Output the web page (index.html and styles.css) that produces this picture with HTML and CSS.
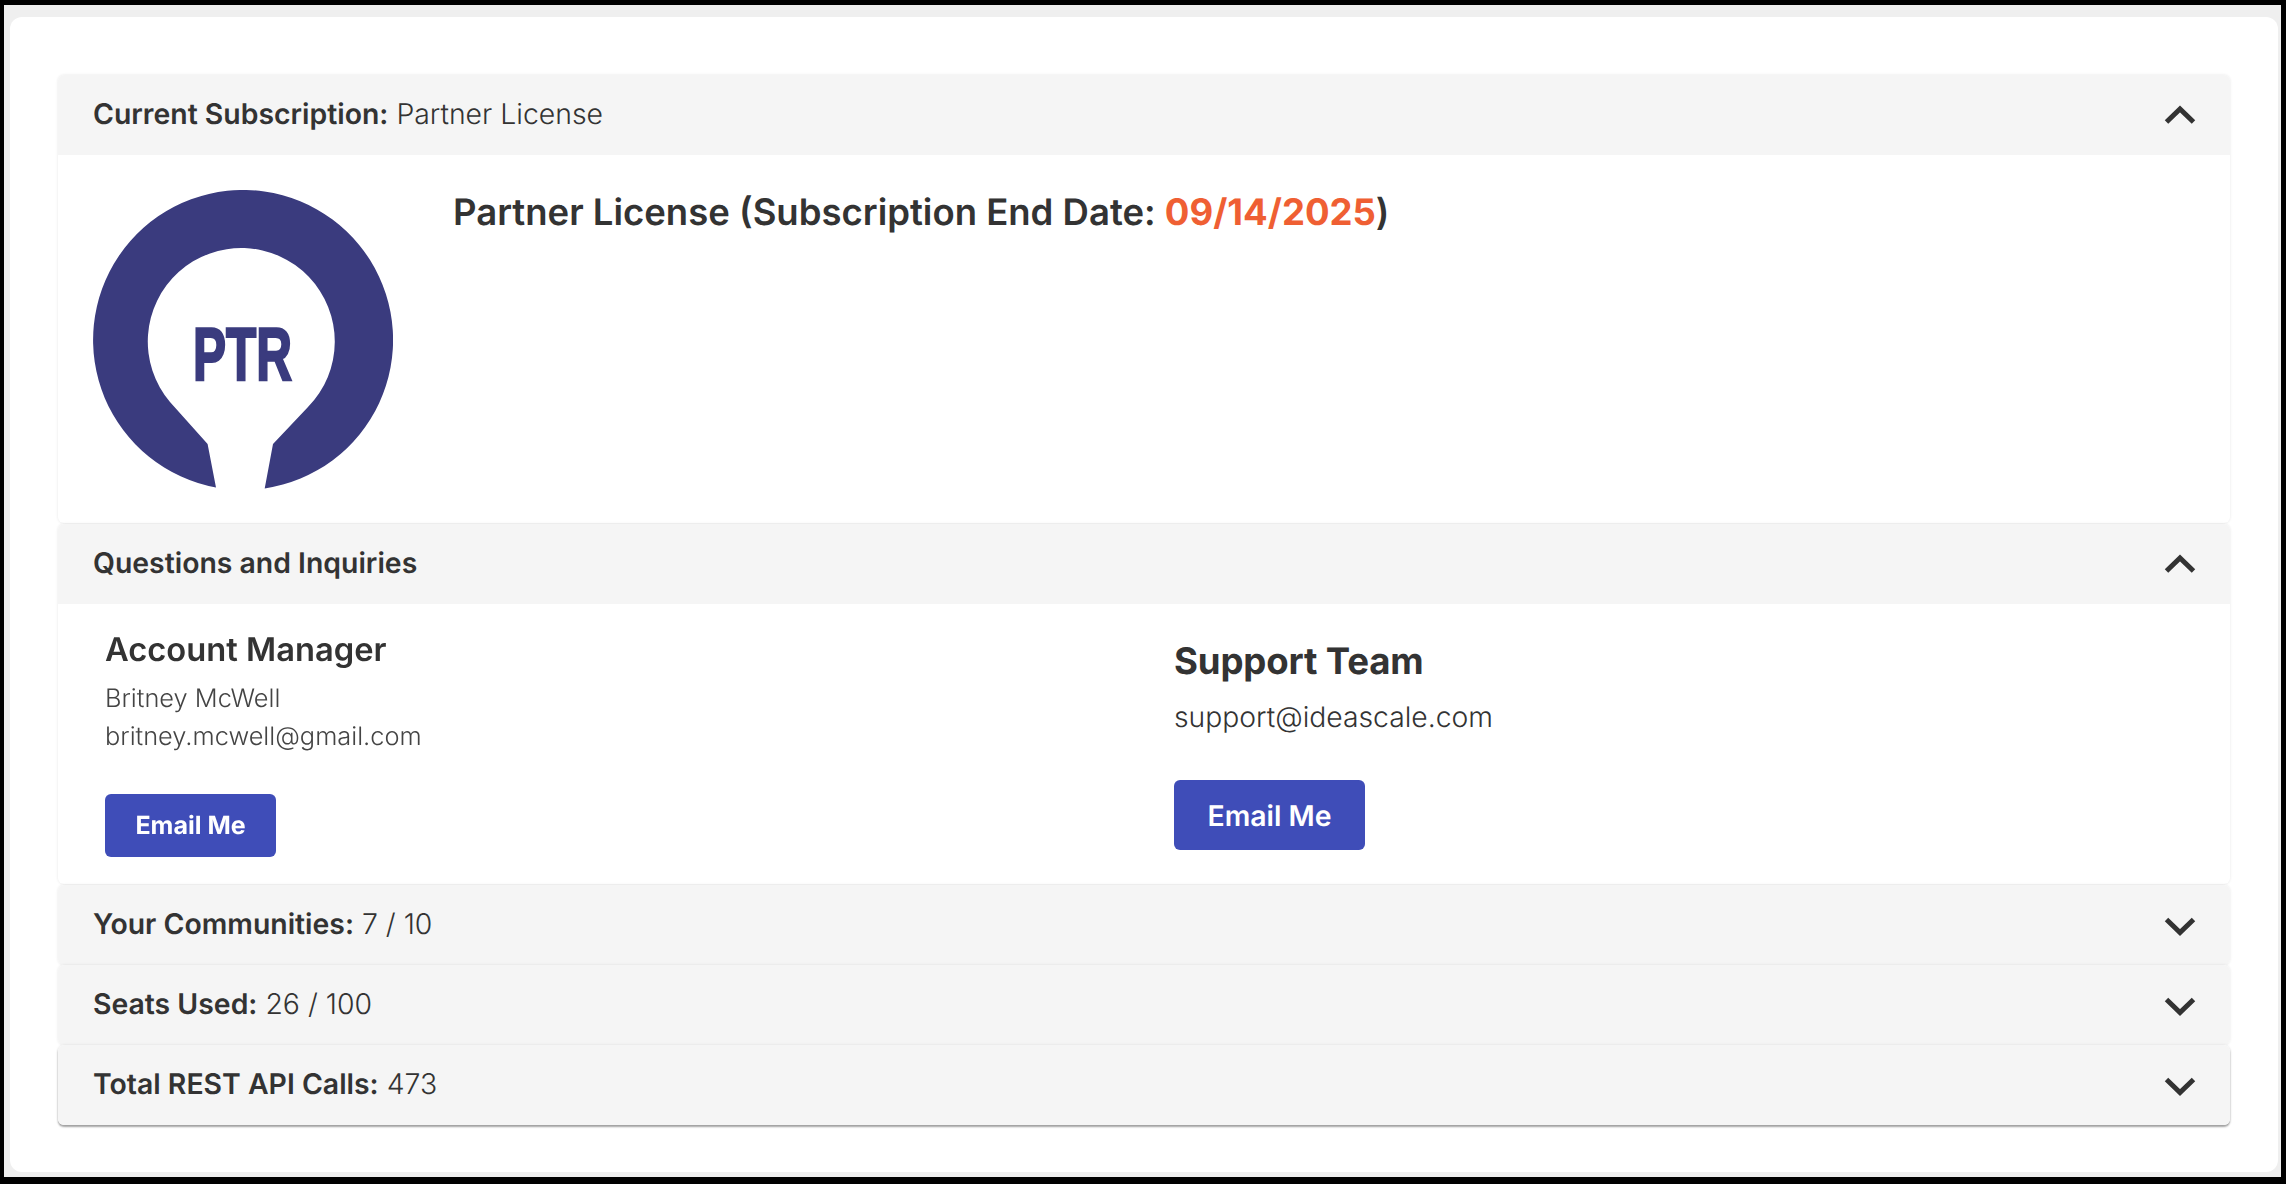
FILE: index.html
```html
<!DOCTYPE html>
<html lang="en">
<head>
<meta charset="utf-8">
<title>Subscription</title>
<link rel="stylesheet" href="styles.css">
</head>
<body>
<div class="frame">
  <main class="sheet">
    <section class="panel open">
      <header class="head">
        <p class="head-text"><b>Current Subscription:</b> Partner License</p>
        <svg class="chev" viewBox="0 0 30 20"><path d="M1.5 17 15 4l13.500 13"/></svg>
      </header>
      <div class="license">
        <svg class="logo" viewBox="0 0 300 300">
          <path class="logo-ring" d="M171.7 298.4A150 150 0 1 0 123 297.500L114.600 254 77 212A93.500 93.500 0 1 1 215 217L180 254Z"/>
          <text class="logo-text" transform="translate(100 190) scale(.66 1)">PTR</text>
        </svg>
        <h2 class="license-title">Partner License (Subscription End Date: <span class="date">09/14/2025</span>)</h2>
      </div>
    </section>
    <section class="panel open">
      <header class="head">
        <p class="head-text"><b>Questions and Inquiries</b></p>
        <svg class="chev" viewBox="0 0 30 20"><path d="M1.5 17 15 4l13.500 13"/></svg>
      </header>
      <div class="contacts">
        <div class="contact small">
          <h3 class="contact-title">Account Manager</h3>
          <p class="contact-line first">Britney McWell</p>
          <p class="contact-line">britney.mcwell@gmail.com</p>
          <a class="btn">Email Me</a>
        </div>
        <div class="contact large">
          <h3 class="contact-title">Support Team</h3>
          <p class="contact-line first">support@ideascale.com</p>
          <a class="btn">Email Me</a>
        </div>
      </div>
    </section>
    <section class="panel">
      <header class="head">
        <p class="head-text"><b>Your Communities:</b> 7 / 10</p>
        <svg class="chev" viewBox="0 0 30 20"><path d="M1.5 4.500 15 17.500 28.500 4.500"/></svg>
      </header>
    </section>
    <section class="panel">
      <header class="head">
        <p class="head-text"><b>Seats Used:</b> 26 / 100</p>
        <svg class="chev" viewBox="0 0 30 20"><path d="M1.5 4.500 15 17.500 28.500 4.500"/></svg>
      </header>
    </section>
    <section class="panel last">
      <header class="head">
        <p class="head-text"><b>Total REST API Calls:</b> 473</p>
        <svg class="chev" viewBox="0 0 30 20"><path d="M1.5 4.500 15 17.500 28.500 4.500"/></svg>
      </header>
    </section>
  </main>
</div>
</body>
</html>
```
FILE: styles.css
```css
* { box-sizing: border-box; }
html, body { margin: 0; height: 100%; }
body {
  background: #000;
  padding: 5px 5px 7px 4px;
  font-family: Inter, "Liberation Sans", sans-serif;
  color: #333;
  text-rendering: geometricPrecision;
}
.frame {
  height: 100%;
  background: #efefef;
  padding: 12px 3px 5px 6px;
}
.sheet {
  height: 100%;
  background: #fff;
  border-radius: 12px;
  padding: 58px 48px 0 48px;
}
.panel {
  position: relative;
  background: #fff;
  border-radius: 6px;
  overflow: hidden;
  box-shadow: 0 0 3px rgba(0,0,0,.1);
}
.open { margin-bottom: 1px; }
.last { box-shadow: 0 0 3px rgba(0,0,0,.1), 0 2px 2px rgba(0,0,0,.35); }
.head {
  height: 80px;
  background: #f5f5f5;
  display: flex;
  align-items: center;
  justify-content: space-between;
  padding: 0 35px;
}
.head-text {
  margin: 0;
  font-size: 28.4px;
  font-weight: 300;
  position: relative;
  top: -2px;
}
.head-text b { font-weight: 600; }
.chev { width: 30px; height: 20px; fill: none; stroke: #333; stroke-width: 5; overflow: visible; }
.license {
  display: flex;
  gap: 60px;
  height: 368px;
  padding: 35px;
}
.logo { width: 300px; height: 300px; flex: none; }
.logo-ring { fill: #3a3b7e; }
.logo-text { fill: #3a3b7e; stroke: #3a3b7e; stroke-width: 2.5; font: 700 75px "Liberation Sans", sans-serif; }
.license-title {
  margin: 1px 0 0;
  font-size: 36.5px;
  font-weight: 600;
  line-height: 42px;
}
.date { font-weight: 700; color: #ef5f33; }
.contacts {
  display: grid;
  grid-template-columns: 1069px 1fr;
  height: 280px;
  padding-left: 47px;
}
.contact-title { margin: 0; font-weight: 600; }
.contact-line { margin: 0; font-weight: 300; }
.btn {
  display: flex;
  align-items: center;
  justify-content: center;
  background: #3f4db8;
  color: #fff;
  font-weight: 600;
  border-radius: 6px;
}
.small { padding-top: 26px; filter: blur(.4px); }
.small .contact-title { font-size: 32.7px; line-height: 38px; }
.small .contact-line { font-size: 25.4px; line-height: 38px; color: #444; }
.small .first { margin-top: 12px; }
.small .btn { width: 171px; height: 63px; margin-top: 38px; font-size: 25px; font-weight: 700; }
.large { padding-top: 36px; }
.large .contact-title { font-size: 36.6px; font-weight: 700; line-height: 42px; letter-spacing: -.15px; }
.large .contact-line { font-size: 28.3px; line-height: 40px; }
.large .first { margin-top: 15px; }
.large .btn { width: 191px; height: 70px; margin-top: 43px; font-size: 28.4px; }
```
